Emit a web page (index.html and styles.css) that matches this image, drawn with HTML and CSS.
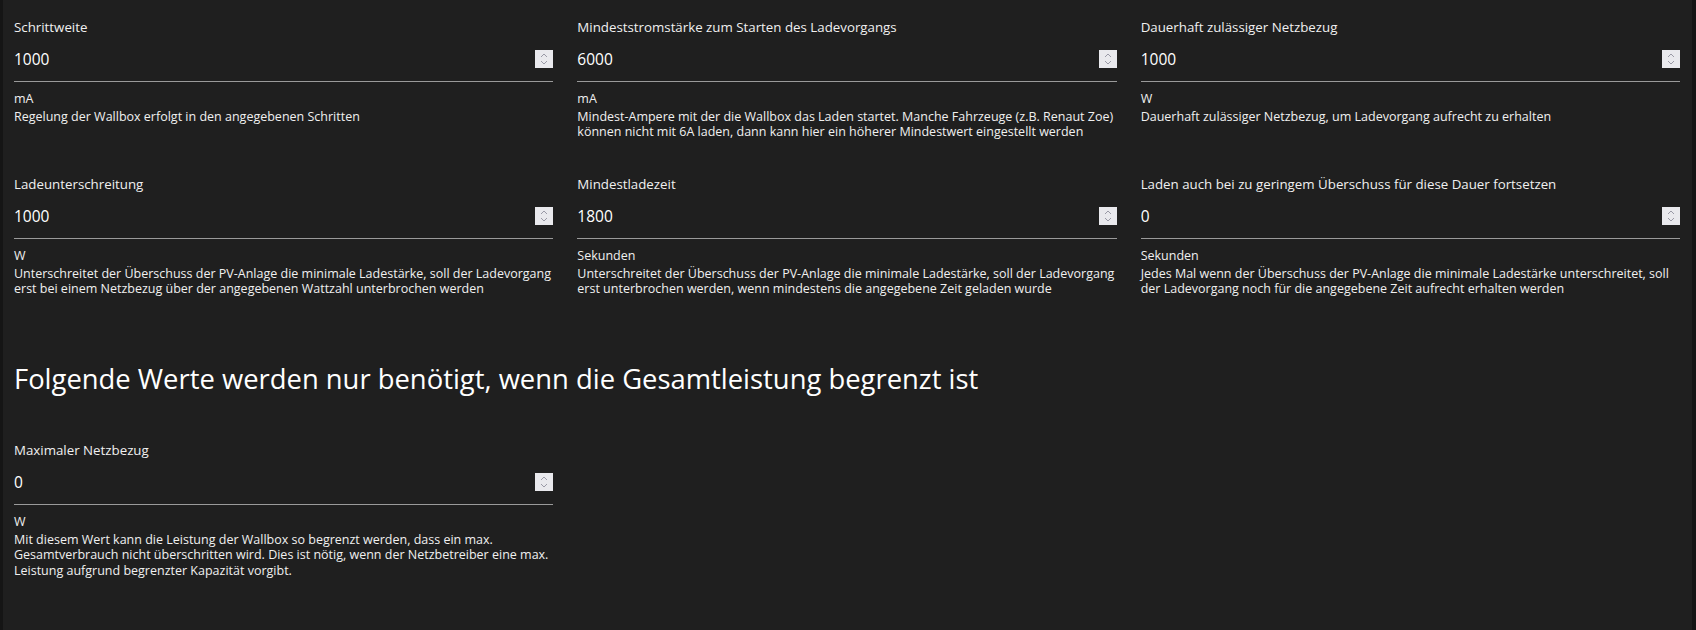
FILE: index.html
```html
<!DOCTYPE html>
<html lang="de">
<head>
    <meta charset="UTF-8">
    <meta name="viewport" content="width=device-width, initial-scale=1.0">
    <title>PV-Überschussladen</title>
    <link rel="stylesheet" href="styles.css">
</head>
<body>
    <div class="page">
        <div class="field-grid">
            <div class="field">
                <label class="field-label" for="stepSize">Schrittweite</label>
                <div class="input-row">
                    <input type="number" id="stepSize" value="1000">
                    <span class="spinner"><svg width="18" height="18" viewBox="0 0 18 18"><rect width="18" height="18" fill="#e9e9ed"/><path d="M6 7 L9 4 L12 7 M6 11 L9 14 L12 11" fill="none" stroke="#9a9aa6" stroke-width="1"/></svg></span>
                </div>
                <div class="unit">mA</div>
                <div class="hint">Regelung der Wallbox erfolgt in den angegebenen Schritten</div>
            </div>

            <div class="field">
                <label class="field-label" for="minCurrent">Mindeststromstärke zum Starten des Ladevorgangs</label>
                <div class="input-row">
                    <input type="number" id="minCurrent" value="6000">
                    <span class="spinner"><svg width="18" height="18" viewBox="0 0 18 18"><rect width="18" height="18" fill="#e9e9ed"/><path d="M6 7 L9 4 L12 7 M6 11 L9 14 L12 11" fill="none" stroke="#9a9aa6" stroke-width="1"/></svg></span>
                </div>
                <div class="unit">mA</div>
                <div class="hint">Mindest-Ampere mit der die Wallbox das Laden startet. Manche Fahrzeuge (z.B. Renaut Zoe) können nicht mit 6A laden, dann kann hier ein höherer Mindestwert eingestellt werden</div>
            </div>

            <div class="field">
                <label class="field-label" for="gridDraw">Dauerhaft zulässiger Netzbezug</label>
                <div class="input-row">
                    <input type="number" id="gridDraw" value="1000">
                    <span class="spinner"><svg width="18" height="18" viewBox="0 0 18 18"><rect width="18" height="18" fill="#e9e9ed"/><path d="M6 7 L9 4 L12 7 M6 11 L9 14 L12 11" fill="none" stroke="#9a9aa6" stroke-width="1"/></svg></span>
                </div>
                <div class="unit">W</div>
                <div class="hint">Dauerhaft zulässiger Netzbezug, um Ladevorgang aufrecht zu erhalten</div>
            </div>

            <div class="field">
                <label class="field-label" for="undershoot">Ladeunterschreitung</label>
                <div class="input-row">
                    <input type="number" id="undershoot" value="1000">
                    <span class="spinner"><svg width="18" height="18" viewBox="0 0 18 18"><rect width="18" height="18" fill="#e9e9ed"/><path d="M6 7 L9 4 L12 7 M6 11 L9 14 L12 11" fill="none" stroke="#9a9aa6" stroke-width="1"/></svg></span>
                </div>
                <div class="unit">W</div>
                <div class="hint">Unterschreitet der Überschuss der PV-Anlage die minimale Ladestärke, soll der Ladevorgang erst bei einem Netzbezug über der angegebenen Wattzahl unterbrochen werden</div>
            </div>

            <div class="field">
                <label class="field-label" for="minChargeTime">Mindestladezeit</label>
                <div class="input-row">
                    <input type="number" id="minChargeTime" value="1800">
                    <span class="spinner"><svg width="18" height="18" viewBox="0 0 18 18"><rect width="18" height="18" fill="#e9e9ed"/><path d="M6 7 L9 4 L12 7 M6 11 L9 14 L12 11" fill="none" stroke="#9a9aa6" stroke-width="1"/></svg></span>
                </div>
                <div class="unit">Sekunden</div>
                <div class="hint">Unterschreitet der Überschuss der PV-Anlage die minimale Ladestärke, soll der Ladevorgang erst unterbrochen werden, wenn mindestens die angegebene Zeit geladen wurde</div>
            </div>

            <div class="field">
                <label class="field-label" for="continueTime">Laden auch bei zu geringem Überschuss für diese Dauer fortsetzen</label>
                <div class="input-row">
                    <input type="number" id="continueTime" value="0">
                    <span class="spinner"><svg width="18" height="18" viewBox="0 0 18 18"><rect width="18" height="18" fill="#e9e9ed"/><path d="M6 7 L9 4 L12 7 M6 11 L9 14 L12 11" fill="none" stroke="#9a9aa6" stroke-width="1"/></svg></span>
                </div>
                <div class="unit">Sekunden</div>
                <div class="hint">Jedes Mal wenn der Überschuss der PV-Anlage die minimale Ladestärke unterschreitet, soll der Ladevorgang noch für die angegebene Zeit aufrecht erhalten werden</div>
            </div>
        </div>

        <h2 class="section-title">Folgende Werte werden nur benötigt, wenn die Gesamtleistung begrenzt ist</h2>

        <div class="field-grid">
            <div class="field">
                <label class="field-label" for="maxGridDraw">Maximaler Netzbezug</label>
                <div class="input-row">
                    <input type="number" id="maxGridDraw" value="0">
                    <span class="spinner"><svg width="18" height="18" viewBox="0 0 18 18"><rect width="18" height="18" fill="#e9e9ed"/><path d="M6 7 L9 4 L12 7 M6 11 L9 14 L12 11" fill="none" stroke="#9a9aa6" stroke-width="1"/></svg></span>
                </div>
                <div class="unit">W</div>
                <div class="hint">Mit diesem Wert kann die Leistung der Wallbox so begrenzt werden, dass ein max. Gesamtverbrauch nicht überschritten wird. Dies ist nötig, wenn der Netzbetreiber eine max. Leistung aufgrund begrenzter Kapazität vorgibt.</div>
            </div>
        </div>
    </div>
</body>
</html>
```

FILE: styles.css
```css
:root {
    --bg-color: #1f1f1f;
    --edge-color: #151515;
    --text-color: #f0f0f0;
    --value-color: #ffffff;
    --line-color: #9a9a9a;
}

body {
    margin: 0;
    background-color: var(--bg-color);
    color: var(--text-color);
    font-family: 'Open Sans', 'Noto Sans', sans-serif;
}

.page {
    min-height: 100vh;
    box-sizing: border-box;
    border-left: 3px solid var(--edge-color);
    border-right: 4px solid var(--edge-color);
    padding: 18px 12px 0 11px;
}

.field-grid {
    display: grid;
    grid-template-columns: repeat(3, 1fr);
    column-gap: 24px;
    row-gap: 35px;
}

.field {
    display: flex;
    flex-direction: column;
}

.field-label {
    font-size: 13.3px;
    line-height: 18px;
}

.input-row {
    display: flex;
    align-items: center;
    height: 45px;
    border-bottom: 1px solid var(--line-color);
}

.input-row input {
    flex: 1;
    min-width: 0;
    padding: 0;
    border: none;
    outline: none;
    background: transparent;
    color: var(--value-color);
    font-family: inherit;
    font-size: 15.5px;
    appearance: textfield;
    -moz-appearance: textfield;
}

.input-row input::-webkit-inner-spin-button,
.input-row input::-webkit-outer-spin-button {
    -webkit-appearance: none;
    margin: 0;
}

.spinner {
    display: flex;
    width: 18px;
    height: 18px;
}

.unit {
    margin-top: 8px;
    font-size: 12.5px;
    line-height: 18.5px;
}

.hint {
    font-size: 12.5px;
    line-height: 15.8px;
}

.section-title {
    margin: 64px 0 45px;
    font-size: 27.4px;
    font-weight: 400;
    line-height: 35px;
    color: var(--value-color);
}
```
